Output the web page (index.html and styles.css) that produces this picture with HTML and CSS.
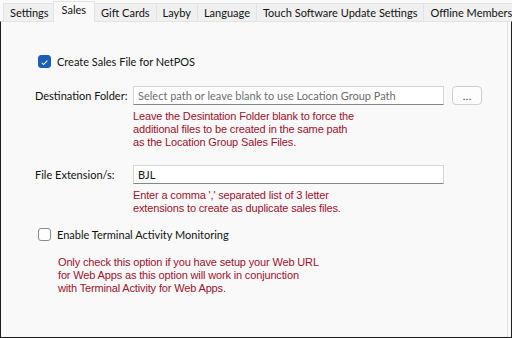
FILE: index.html
```html
<!DOCTYPE html>
<html lang="en">
<head>
    <meta charset="UTF-8">
    <title>Sales Settings</title>
    <link rel="stylesheet" href="styles.css">
</head>
<body>
    <div class="tabs">
        <div class="tab">Settings</div>
        <div class="tab active">Sales</div>
        <div class="tab">Gift Cards</div>
        <div class="tab">Layby</div>
        <div class="tab">Language</div>
        <div class="tab">Touch Software Update Settings</div>
        <div class="tab">Offline Members</div>
    </div>

    <div class="panel">
        <label class="check-row first">
            <span class="box checked">
                <svg width="13" height="13" viewBox="0 0 13 13"><path d="M3.2 6.8 L5.4 9 L9.8 4.2" fill="none" stroke="#fff" stroke-width="1.2"/></svg>
            </span>
            <span>Create Sales File for NetPOS</span>
        </label>

        <div class="field-row dest">
            <span class="field-label">Destination Folder:</span>
            <input type="text" class="field" placeholder="Select path or leave blank to use Location Group Path">
            <button class="browse">...</button>
        </div>
        <p class="help">Leave the Desintation Folder blank to force the<br>additional files to be created in the same path<br>as the Location Group Sales Files.</p>

        <div class="field-row ext">
            <span class="field-label">File Extension/s:</span>
            <input type="text" class="field" value="BJL">
        </div>
        <p class="help">Enter a comma ',' separated list of 3 letter<br>extensions to create as duplicate sales files.</p>

        <label class="check-row second">
            <span class="box"></span>
            <span>Enable Terminal Activity Monitoring</span>
        </label>
        <p class="help note">Only check this option if you have setup your Web URL<br>for Web Apps as this option will work in conjunction<br>with Terminal Activity for Web Apps.</p>
    </div>
</body>
</html>
```

FILE: styles.css
```css
body {
    margin: 0;
    width: 512px;
    height: 338px;
    background-color: #fafafa;
    font-family: Lato, "Noto Sans", sans-serif;
    font-size: 11px;
    color: #111;
    display: flex;
    flex-direction: column;
    overflow: hidden;
}

.tabs {
    display: flex;
    align-items: flex-end;
    height: 21px;
    padding-left: 3px;
    box-sizing: border-box;
}

.tab {
    height: 18px;
    padding: 0 6px;
    box-sizing: border-box;
    background-color: #f0f0f0;
    border: 1px solid #e3e3e3;
    border-bottom: none;
    margin-right: -1px;
    line-height: 17px;
    white-space: nowrap;
}

.tab.active {
    height: 21px;
    background-color: #f9f9f9;
    margin: 0 -1px 0 -2px;
    padding: 0 8px;
    line-height: 16px;
    position: relative;
    top: 1px;
}

.panel {
    flex: 1;
    background-color: #f9f9f9;
    border: 1px solid #1e1e1e;
    border-top: 1px solid #e3e3e3;
    box-shadow: inset -3px 0 0 #f9f9f9, inset -4px 0 0 #e3e3e3;
    padding-left: 34px;
}

.check-row {
    display: flex;
    align-items: center;
    gap: 6px;
    margin-left: 3px;
}

.check-row.first {
    margin-top: 33px;
}

.check-row.second {
    margin-top: 13px;
}

.box {
    width: 13px;
    height: 13px;
    box-sizing: border-box;
    border: 1px solid #8a8a8a;
    border-radius: 3px;
    background-color: #fdfdfd;
    display: flex;
}

.box.checked {
    background-color: #1d5fb6;
    border-color: #1d5fb6;
}

.field-row {
    display: flex;
    align-items: center;
}

.field-row.dest {
    margin-top: 18px;
}

.field-row.ext {
    margin-top: 16px;
}

.field-label {
    width: 98px;
    white-space: nowrap;
}

.field {
    width: 311px;
    height: 19px;
    box-sizing: border-box;
    border: 1px solid #d6d6d6;
    border-bottom: 1px solid #868686;
    background-color: #fff;
    font-family: Lato, "Noto Sans", sans-serif;
    font-size: 11px;
    padding: 0 4px;
    color: #111;
}

.field::placeholder {
    color: #6d6d6d;
}

.browse {
    width: 30px;
    height: 19px;
    margin-left: 8px;
    border: 1px solid #d0d0d0;
    border-radius: 4px;
    background-color: #fdfdfd;
    font-size: 11px;
    padding: 0;
    line-height: 12px;
    color: #222;
}

.help {
    margin: 5px 0 0 98px;
    font-family: "Liberation Sans", Arial, sans-serif;
    font-size: 11px;
    letter-spacing: -0.15px;
    line-height: 13px;
    color: #a0112d;
}

.help.note {
    margin: 15px 0 0 23px;
}
```
